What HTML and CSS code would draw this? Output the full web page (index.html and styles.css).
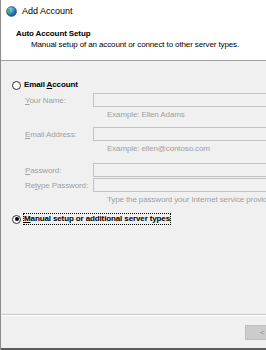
FILE: index.html
```html
<!DOCTYPE html>
<html lang="en">

<head>
    <meta charset="UTF-8">
    <meta name="viewport" content="width=device-width, initial-scale=1.0">
    <title>Add Account</title>
    <link rel="stylesheet" href="styles.css">
</head>

<body>
    <div class="window">
        <div class="titlebar">
            <svg class="app-icon" width="11" height="11" viewBox="0 0 11 11">
                <defs>
                    <radialGradient id="globe" cx="35%" cy="30%" r="70%">
                        <stop offset="0" stop-color="#9fd3f5" />
                        <stop offset="0.6" stop-color="#2f7fc4" />
                        <stop offset="1" stop-color="#1b4f8a" />
                    </radialGradient>
                </defs>
                <circle cx="5.5" cy="5.5" r="5" fill="url(#globe)" />
                <path d="M2.2 3.2 C3.5 2.6 4.6 3.4 4.2 4.6 C3.8 5.6 4.8 6.4 4.4 7.6 C3.6 8.4 2.2 7.4 1.6 6 C1.2 4.8 1.4 3.8 2.2 3.2 Z" fill="#5daa3c" />
                <path d="M6.4 2.2 C7.6 2.2 8.8 3.2 9 4.2 C8 4.4 7 3.8 6.4 2.2 Z" fill="#6bb845" />
                <circle cx="5.5" cy="5.5" r="5" fill="none" stroke="#28588f" stroke-width="0.6" />
            </svg>
            <span class="title">Add Account</span>
        </div>

        <div class="header">
            <div class="header-title">Auto Account Setup</div>
            <div class="header-desc">Manual setup of an account or connect to other server types.</div>
        </div>

        <div class="content">
            <div class="radio-row first">
                <span class="radio"></span>
                <span class="radio-label">Email <u>A</u>ccount</span>
            </div>

            <div class="field">
                <span class="field-label"><u>Y</u>our Name:</span>
                <span class="input"></span>
            </div>
            <div class="hint">Example: Ellen Adams</div>

            <div class="field spaced">
                <span class="field-label"><u>E</u>mail Address:</span>
                <span class="input"></span>
            </div>
            <div class="hint">Example: ellen@contoso.com</div>

            <div class="field spaced-more">
                <span class="field-label"><u>P</u>assword:</span>
                <span class="input"></span>
            </div>
            <div class="field tight">
                <span class="field-label">Re<u>t</u>ype Password:</span>
                <span class="input"></span>
            </div>
            <div class="hint">Type the password your Internet service provider has given you.</div>

            <div class="radio-row second">
                <span class="radio checked"></span>
                <span class="radio-label focused"><u>M</u>anual setup or additional server types</span>
            </div>
        </div>

        <div class="footer">
            <button class="button">&lt; Back</button>
        </div>
        <div class="bottom-edge"></div>
    </div>
</body>

</html>
```

FILE: styles.css
```css
html, body {
    margin: 0;
    padding: 0;
}

body {
    width: 266px;
    height: 350px;
    overflow: hidden;
    background-color: #f0f0f0;
    font-family: "Liberation Sans", Arial, sans-serif;
    font-size: 8px;
    letter-spacing: -0.12px;
    color: #000;
}

.window {
    height: 350px;
    border-left: 1px solid #8c8c8c;
    box-sizing: border-box;
    display: flex;
    flex-direction: column;
}

.titlebar {
    height: 22px;
    background-color: #fff;
    display: flex;
    align-items: center;
    padding-left: 5px;
}

.app-icon {
    flex-shrink: 0;
}

.title {
    margin-left: 5px;
    font-size: 9px;
    letter-spacing: 0;
}

.header {
    height: 39px;
    background-color: #fff;
    padding: 6px 0 0 15px;
    box-sizing: border-box;
    border-bottom: 1px solid #a0a0a0;
    line-height: 11px;
}

.header-title {
    font-weight: bold;
}

.header-desc {
    padding-left: 15px;
    white-space: nowrap;
}

.content {
    height: 253px;
    padding-left: 11px;
    border-bottom: 1px solid #c8c8c8;
    box-shadow: 0 1px 0 #fff;
}

.radio-row {
    display: flex;
    align-items: center;
    height: 12px;
}

.radio-row.first {
    margin-top: 18px;
}

.radio-row.second {
    margin-top: 7px;
}

.radio {
    width: 7px;
    height: 7px;
    border: 1px solid #333;
    border-radius: 50%;
    background-color: #fff;
    position: relative;
    flex-shrink: 0;
}

.radio.checked::after {
    content: "";
    position: absolute;
    left: 1.5px;
    top: 1.5px;
    width: 4px;
    height: 4px;
    border-radius: 50%;
    background-color: #000;
}

.radio-label {
    margin-left: 3px;
    font-weight: bold;
    line-height: 10px;
    white-space: nowrap;
}

.radio-label.focused {
    outline: 1px dotted #000;
}

.field {
    display: grid;
    grid-template-columns: 68px 200px;
    align-items: center;
    margin-top: 2px;
    margin-left: 13px;
}

.field.spaced {
    margin-top: 6px;
}

.field.spaced-more {
    margin-top: 8px;
}

.field.tight {
    margin-top: 1px;
}

.field-label {
    color: #a0a0a0;
    white-space: nowrap;
}

.input {
    height: 14px;
    box-sizing: border-box;
    border: 1px solid #c3c3c3;
    background-color: #f0f0f0;
}

.hint {
    margin: 2px 0 0 95px;
    line-height: 12px;
    color: #a0a0a0;
    white-space: nowrap;
}

.footer {
    flex: 1;
    display: flex;
    justify-content: flex-end;
    padding-top: 10px;
    overflow: hidden;
}

.button {
    margin-right: -50px;
    width: 71px;
    height: 15px;
    padding: 0;
    border: 1px solid #bfbfbf;
    background-color: #cccccc;
    color: #8a8a8a;
    font-family: inherit;
    font-size: 8px;
    text-align: left;
    padding-left: 14px;
}

.bottom-edge {
    height: 2px;
    background-color: #5c5c5c;
}
```
